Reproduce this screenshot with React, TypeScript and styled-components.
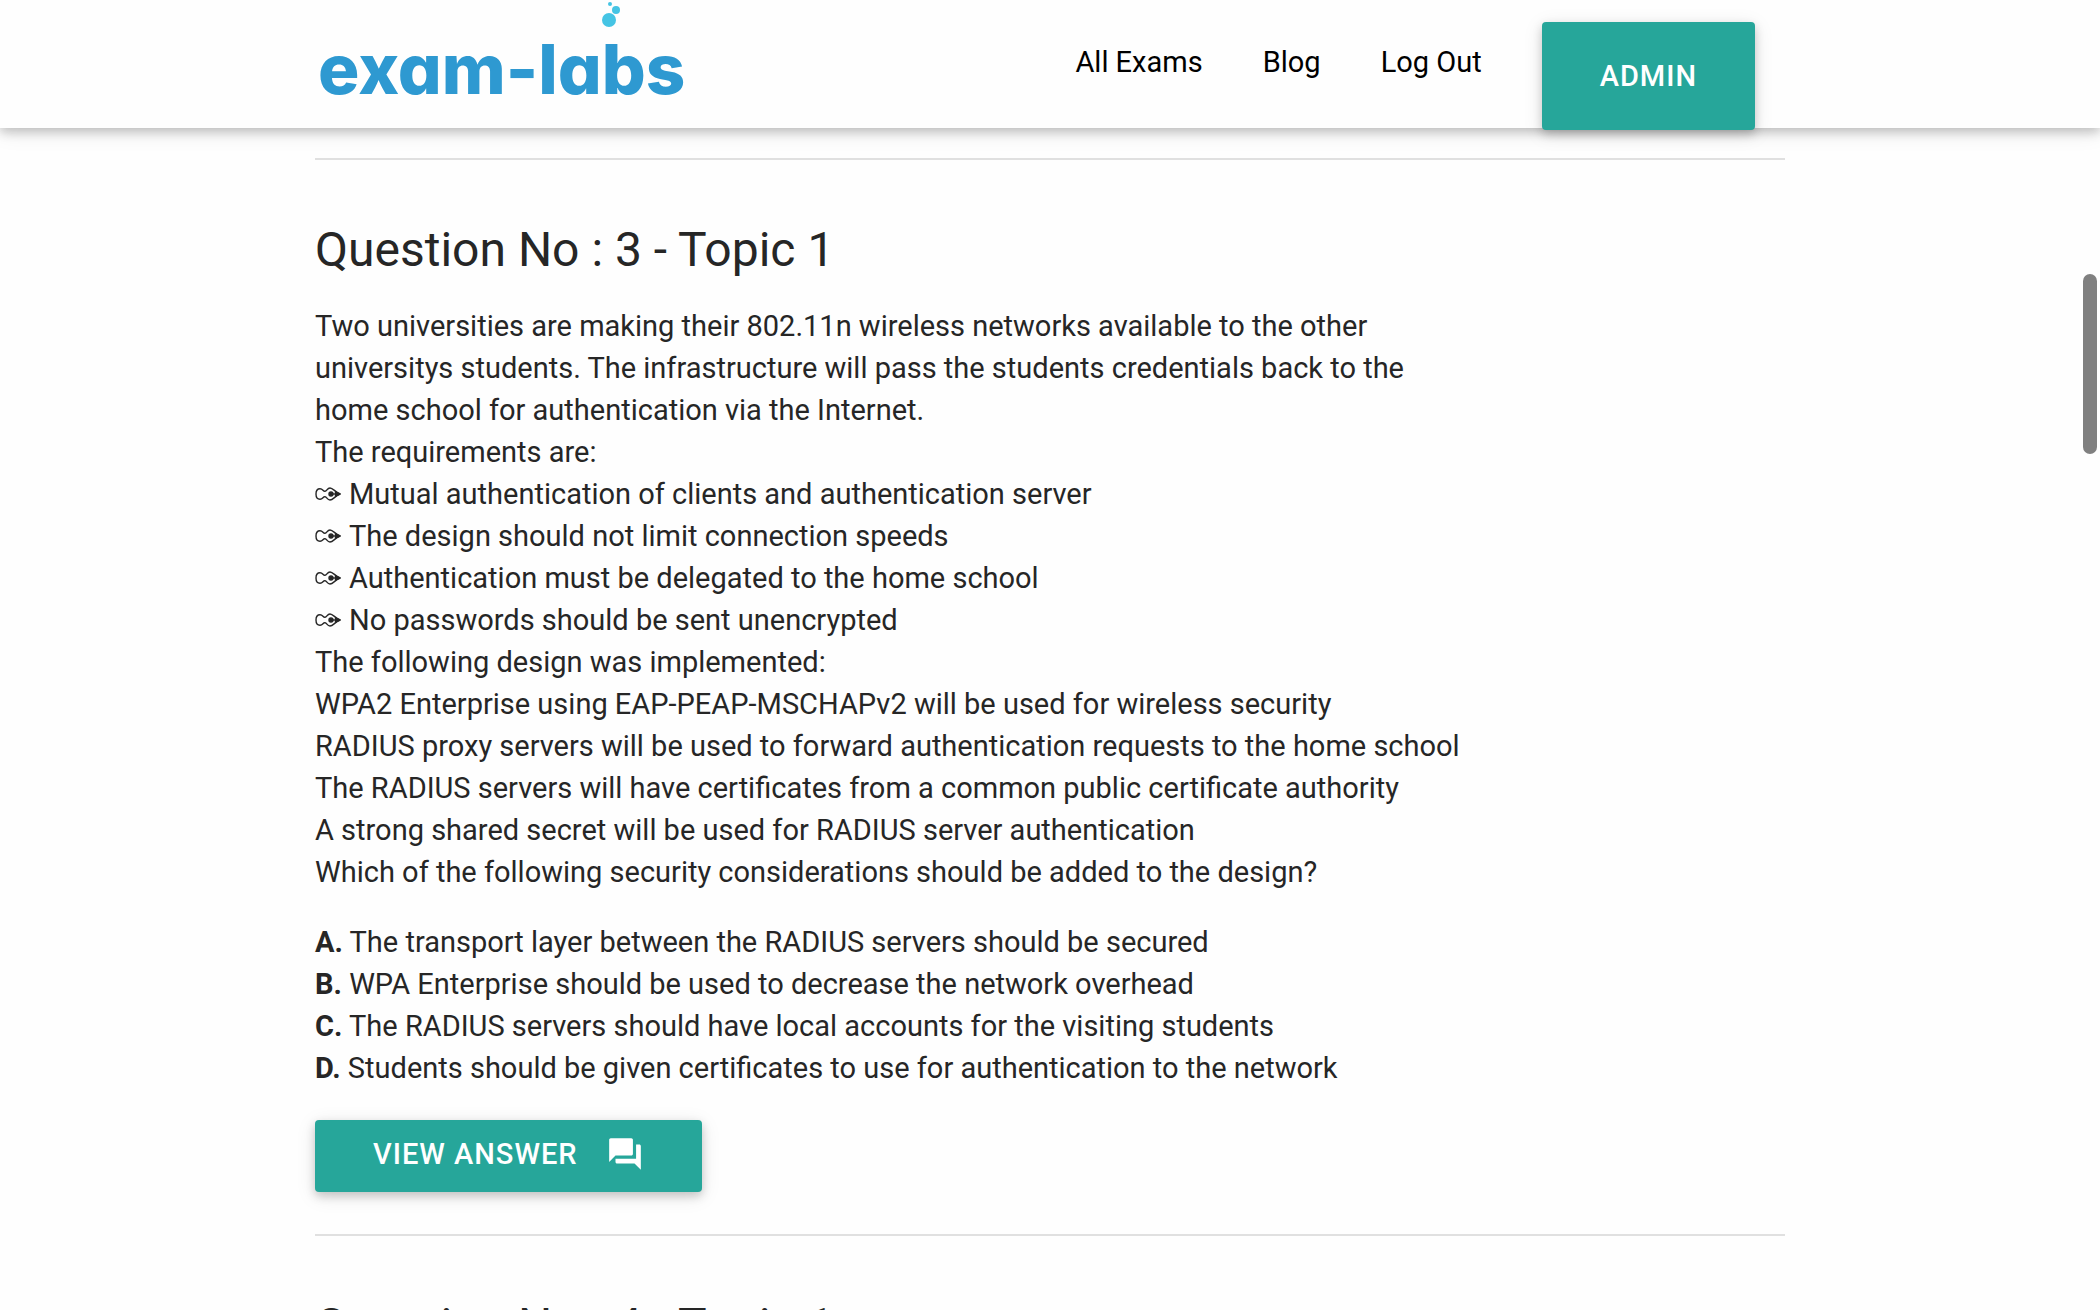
import React from 'react';
import styled, { createGlobalStyle } from 'styled-components';

const GlobalStyle = createGlobalStyle`
  * { box-sizing: border-box; }
  html { overflow: hidden; }
  body {
    margin: 0;
    background: #fefefe;
    color: #262626;
    font-family: Roboto, "Liberation Sans", sans-serif;
    font-size: 29px;
    line-height: 42px;
  }
`;

const Page = styled.div`
  height: 100vh;
  overflow: hidden;
`;

const Header = styled.header`
  position: relative;
  z-index: 1;
  height: 128px;
  background: #fefefe;
  box-shadow: 0 4px 10px rgba(0, 0, 0, 0.2), 0 4px 20px rgba(0, 0, 0, 0.1);
`;

const Container = styled.div`
  width: 70%;
  margin: 0 auto;
`;

const Bar = styled(Container)`
  display: flex;
  justify-content: space-between;
  align-items: flex-start;
  padding-right: 30px;
`;

const LogoLink = styled.a`
  display: block;
  height: 128px;
  margin-left: 4px;
`;

const LogoDrawing = styled.svg`
  display: block;
  overflow: visible;
`;

const Wordmark = styled.text`
  font-family: Inter, "Liberation Sans", sans-serif;
  font-size: 69px;
  font-weight: 800;
  font-feature-settings: "cv11";
  fill: #2e99d1;
`;

const Nav = styled.nav`
  display: flex;
  align-items: flex-start;
  gap: 60px;
`;

const NavLink = styled.a`
  padding-top: 41px;
  color: #000;
  text-decoration: none;
`;

const Button = styled.button<{ $tall?: boolean }>`
  display: flex;
  align-items: center;
  gap: 28px;
  height: ${p => (p.$tall ? 108 : 72)}px;
  margin: ${p => (p.$tall ? '22px 0 0' : '0')};
  padding: ${p => (p.$tall ? '0 58px' : '0 58px 4px')};
  border: 0;
  border-radius: 4px;
  background: #26a69a;
  color: #fff;
  font: 500 29px/42px Roboto, "Liberation Sans", sans-serif;
  letter-spacing: 1px;
  text-transform: uppercase;
  box-shadow: 0 4px 10px rgba(0, 0, 0, 0.18), 0 4px 20px rgba(0, 0, 0, 0.1);
  cursor: pointer;
`;

const Rule = styled.hr`
  height: 2px;
  margin: 0;
  border: 0;
  background: #e0e0e0;
`;

const Content = styled(Container)`
  padding-top: 30px;
`;

const Question = styled.article`
  padding: 58px 0 42px;
`;

const Title = styled.h2`
  margin: 0 0 23px;
  font-size: 48px;
  font-weight: 400;
  line-height: 64px;
`;

const Text = styled.p`
  margin: 0 0 28px;
`;

const Answers = styled.p`
  margin: 0 0 31px;
`;

const Line = styled.span`
  display: block;
`;

const Letter = styled.strong`
  font-weight: 700;
`;

const Nib = styled.svg`
  margin-right: 8px;
  vertical-align: 3px;
`;

const ScrollThumb = styled.div`
  position: fixed;
  top: 274px;
  right: 3px;
  width: 14px;
  height: 180px;
  border-radius: 7px;
  background: #808080;
`;

const Logo = () => (
  <LogoDrawing width="362" height="128" viewBox="0 0 362 128" role="img" aria-label="exam-labs">
    <Wordmark x="-1" y="94">exam-labs</Wordmark>
    <g fill="#45c4e4">
      <circle cx="290" cy="20" r="7" />
      <circle cx="297" cy="10" r="4" />
      <circle cx="291" cy="4" r="2" />
    </g>
  </LogoDrawing>
);

const NibIcon = () => (
  <Nib width="26" height="14" viewBox="0 0 26 14" fill="none" stroke="#262626" strokeWidth="1.4" strokeLinejoin="round" aria-hidden="true">
    <path d="M10 4.200C8 4.600 8 1.800 5 1.800C2 1.800 1 4 1 7S2 12.200 5 12.200C8 12.200 8 9.400 10 9.800" />
    <path d="M10 4.200C12 4.200 12 1 15 1C18 1 20 5 25 7C20 9 18 13 15 13C12 13 12 9.800 10 9.800" />
    <circle cx="16" cy="7" r="2" fill="#262626" />
    <path d="M16 7H21" />
    <path d="M20.500 4.800L25 7L20.500 9.200Z" fill="#262626" />
  </Nib>
);

const ForumIcon = () => (
  <svg width="38" height="38" viewBox="0 0 24 24" fill="currentColor" aria-hidden="true">
    <path d="M21 6h-2v9H6v2c0 .55.45 1 1 1h11l4 4V7c0-.55-.45-1-1-1zm-4 6V3c0-.55-.45-1-1-1H3c-.55 0-1 .45-1 1v14l4-4h10c.55 0 1-.45 1-1z" />
  </svg>
);

const intro = [
  'Two universities are making their 802.11n wireless networks available to the other',
  'universitys students. The infrastructure will pass the students credentials back to the',
  'home school for authentication via the Internet.',
  'The requirements are:',
];

const requirements = [
  'Mutual authentication of clients and authentication server',
  'The design should not limit connection speeds',
  'Authentication must be delegated to the home school',
  'No passwords should be sent unencrypted',
];

const design = [
  'The following design was implemented:',
  'WPA2 Enterprise using EAP-PEAP-MSCHAPv2 will be used for wireless security',
  'RADIUS proxy servers will be used to forward authentication requests to the home school',
  'The RADIUS servers will have certificates from a common public certificate authority',
  'A strong shared secret will be used for RADIUS server authentication',
  'Which of the following security considerations should be added to the design?',
];

const answers = [
  ['A.', 'The transport layer between the RADIUS servers should be secured'],
  ['B.', 'WPA Enterprise should be used to decrease the network overhead'],
  ['C.', 'The RADIUS servers should have local accounts for the visiting students'],
  ['D.', 'Students should be given certificates to use for authentication to the network'],
];

export default function App() {
  return (
    <Page>
      <GlobalStyle />
      <Header>
        <Bar>
          <LogoLink href="#">
            <Logo />
          </LogoLink>
          <Nav>
            <NavLink href="#exams">All Exams</NavLink>
            <NavLink href="#blog">Blog</NavLink>
            <NavLink href="#logout">Log Out</NavLink>
            <Button type="button" $tall>Admin</Button>
          </Nav>
        </Bar>
      </Header>
      <Content as="main">
        <Rule />
        <Question>
          <Title>Question No : 3 - Topic 1</Title>
          <Text>
            {intro.map(line => <Line key={line}>{line}</Line>)}
            {requirements.map(line => (
              <Line key={line}><NibIcon />{line}</Line>
            ))}
            {design.map(line => <Line key={line}>{line}</Line>)}
          </Text>
          <Answers>
            {answers.map(([letter, text]) => (
              <Line key={letter}><Letter>{letter}</Letter> {text}</Line>
            ))}
          </Answers>
          <Button type="button">View Answer <ForumIcon /></Button>
        </Question>
        <Rule />
        <Question>
          <Title>Question No : 4 - Topic 1</Title>
        </Question>
      </Content>
      <ScrollThumb />
    </Page>
  );
}
